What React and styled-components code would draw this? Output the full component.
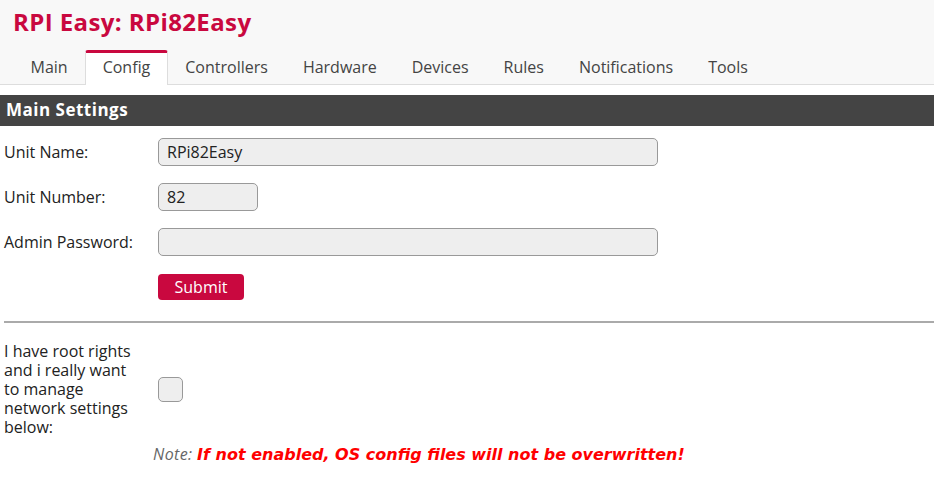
import styled, { createGlobalStyle } from "styled-components";

const Global = createGlobalStyle`
  html, body {
    margin: 0;
    padding: 0;
    background: #fff;
    font-family: "Open Sans", "Liberation Sans", sans-serif;
    color: #222;
  }
`;

const Header = styled.header`
  background: #f8f8f8;
  border-bottom: 1px solid #ddd;
  padding: 7px 0 0 13px;
`;

const Title = styled.h1`
  margin: 0;
  font-size: 24px;
  font-weight: bold;
  color: #c9083f;
  line-height: 30px;
  letter-spacing: 0.4px;
`;

const Tabs = styled.nav`
  display: flex;
  margin-top: 13px;
`;

const Tab = styled.a`
  display: block;
  padding: 0 16.5px;
  height: 31px;
  line-height: 29px;
  font-size: 16px;
  color: #444;
  border: 1px solid transparent;
  border-top: 3px solid transparent;
  border-bottom: none;
  margin-bottom: -1px;
  ${(p) =>
    p.$active &&
    `
    background: #fff;
    border-color: #ddd;
    border-top-color: #c9083f;
    border-radius: 3px 3px 0 0;
    height: 32px;
  `}
`;

const SectionBar = styled.div`
  margin-top: 10px;
  background: #444;
  color: #fff;
  font-weight: bold;
  font-size: 17px;
  height: 31px;
  line-height: 30px;
  padding-left: 6px;
  letter-spacing: 0.5px;
`;

const Form = styled.div`
  padding: 12px 0 0 4px;
`;

const Row = styled.div`
  display: grid;
  grid-template-columns: 154px 1fr;
  align-items: center;
  min-height: 28px;
  margin-bottom: ${(p) => p.$gap ?? 17}px;
`;

const Label = styled.label`
  width: 140px;
  font-size: 16px;
  color: #222;
  line-height: 19px;
`;

const Input = styled.input`
  box-sizing: border-box;
  width: ${(p) => p.$w}px;
  height: 28px;
  background: #eee;
  border: 1px solid #999;
  border-radius: 5px;
  padding: 0 8px;
  font-family: inherit;
  font-size: 16px;
  color: #222;
  outline: none;
`;

const Button = styled.button`
  box-sizing: border-box;
  width: 86px;
  height: 26px;
  border: none;
  border-radius: 4px;
  background: #c9083f;
  color: #fff;
  font-family: inherit;
  font-size: 16px;
  cursor: pointer;
`;

const Rule = styled.hr`
  margin: 20px 0 0 4px;
  border: none;
  border-top: 2px solid #aaa;
`;

const CheckRow = styled(Row)`
  margin-top: 19px;
  margin-bottom: 6px;
`;

const Check = styled.span`
  box-sizing: border-box;
  display: block;
  width: 25px;
  height: 25px;
  background: #eee;
  border: 1px solid #999;
  border-radius: 5px;
`;

const Note = styled.div`
  padding-left: 153px;
  font-size: 16px;
  font-style: italic;
  color: #666;
  letter-spacing: 0.4px;
`;

const Warn = styled.b`
  font-family: "DejaVu Sans", sans-serif;
  font-size: 16px;
  letter-spacing: 0;
  color: #f00;
  font-style: italic;
`;

const tabs = [
  "Main",
  "Config",
  "Controllers",
  "Hardware",
  "Devices",
  "Rules",
  "Notifications",
  "Tools",
];

export default function App() {
  return (
    <>
      <Global />
      <Header>
        <Title>RPI Easy: RPi82Easy</Title>
        <Tabs>
          {tabs.map((t) => (
            <Tab key={t} $active={t === "Config"}>
              {t}
            </Tab>
          ))}
        </Tabs>
      </Header>
      <SectionBar>Main Settings</SectionBar>
      <Form>
        <Row>
          <Label>Unit Name:</Label>
          <Input $w={500} defaultValue="RPi82Easy" />
        </Row>
        <Row>
          <Label>Unit Number:</Label>
          <Input $w={100} defaultValue="82" />
        </Row>
        <Row>
          <Label>Admin Password:</Label>
          <Input $w={500} type="password" />
        </Row>
        <Row $gap={0}>
          <span />
          <div>
            <Button>Submit</Button>
          </div>
        </Row>
      </Form>
      <Rule />
      <Form style={{ paddingTop: 0 }}>
        <CheckRow>
          <Label>
            I have root rights and i really want to manage network settings
            below:
          </Label>
          <Check />
        </CheckRow>
      </Form>
      <Note>
        Note: <Warn>If not enabled, OS config files will not be overwritten!</Warn>
      </Note>
    </>
  );
}
